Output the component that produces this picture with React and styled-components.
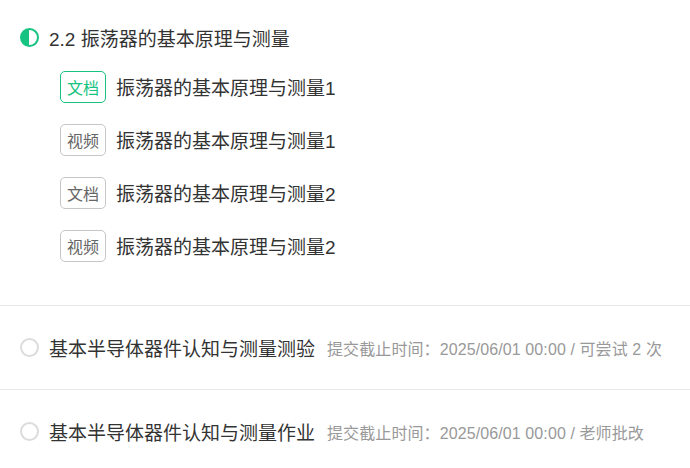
import React from "react";
import styled, { createGlobalStyle } from "styled-components";

const GlobalStyle = createGlobalStyle`
  body {
    margin: 0;
    background: #fff;
    font-family: "Liberation Sans", "Noto Sans CJK SC", sans-serif;
  }
`;

const Page = styled.div`
  width: 690px;
  background: #fff;
`;

const Chapter = styled.section`
  padding: 24px 0 33px 20px;
  border-bottom: 1px solid #e8e8e8;
`;

const ChapterHeader = styled.div`
  display: flex;
  align-items: center;
  height: 26px;
  gap: 10px;
  font-size: 19px;
  color: #333;
`;

const StatusIcon = styled.span`
  box-sizing: border-box;
  width: 19px;
  height: 19px;
  border-radius: 50%;
  flex-shrink: 0;
  border: 2px solid ${(p) => (p.$half ? "#17c381" : "#dcdcdc")};
  background: ${(p) =>
    p.$half ? "linear-gradient(90deg, #17c381 50%, #fff 50%)" : "#fff"};
`;

const Items = styled.ul`
  list-style: none;
  margin: 10px 0 0 40px;
  padding: 0;
`;

const Item = styled.li`
  display: flex;
  align-items: center;
  height: 53px;
  gap: 10px;
  font-size: 19px;
  color: #333;
`;

const Tag = styled.span`
  box-sizing: border-box;
  width: 46px;
  height: 32px;
  display: flex;
  align-items: center;
  justify-content: center;
  border: 1px solid ${(p) => (p.$active ? "#17c381" : "#c6c6c6")};
  color: ${(p) => (p.$active ? "#17c381" : "#666")};
  border-radius: 5px;
  font-size: 16px;
`;

const TaskRow = styled.div`
  display: flex;
  align-items: center;
  height: 83px;
  padding-left: 20px;
  border-bottom: ${(p) => (p.$last ? "none" : "1px solid #e8e8e8")};
`;

const TaskTitle = styled.span`
  margin-left: 10px;
  font-size: 19px;
  color: #333;
`;

const TaskMeta = styled.span`
  margin-left: 12px;
  font-size: 16px;
  letter-spacing: 0.1px;
  color: #999;
`;

const items = [
  { type: "文档", title: "振荡器的基本原理与测量1", active: true },
  { type: "视频", title: "振荡器的基本原理与测量1" },
  { type: "文档", title: "振荡器的基本原理与测量2" },
  { type: "视频", title: "振荡器的基本原理与测量2" },
];

const tasks = [
  {
    title: "基本半导体器件认知与测量测验",
    meta: "提交截止时间：2025/06/01 00:00 / 可尝试 2 次",
  },
  {
    title: "基本半导体器件认知与测量作业",
    meta: "提交截止时间：2025/06/01 00:00 / 老师批改",
  },
];

const App = () => {
  return (
    <Page>
      <GlobalStyle />
      <Chapter>
        <ChapterHeader>
          <StatusIcon $half />
          <span>2.2 振荡器的基本原理与测量</span>
        </ChapterHeader>
        <Items>
          {items.map((it, i) => (
            <Item key={i}>
              <Tag $active={it.active}>{it.type}</Tag>
              <span>{it.title}</span>
            </Item>
          ))}
        </Items>
      </Chapter>
      {tasks.map((t, i) => (
        <TaskRow key={i} $last={i === tasks.length - 1}>
          <StatusIcon />
          <TaskTitle>{t.title}</TaskTitle>
          <TaskMeta>{t.meta}</TaskMeta>
        </TaskRow>
      ))}
    </Page>
  );
};

export default App;
